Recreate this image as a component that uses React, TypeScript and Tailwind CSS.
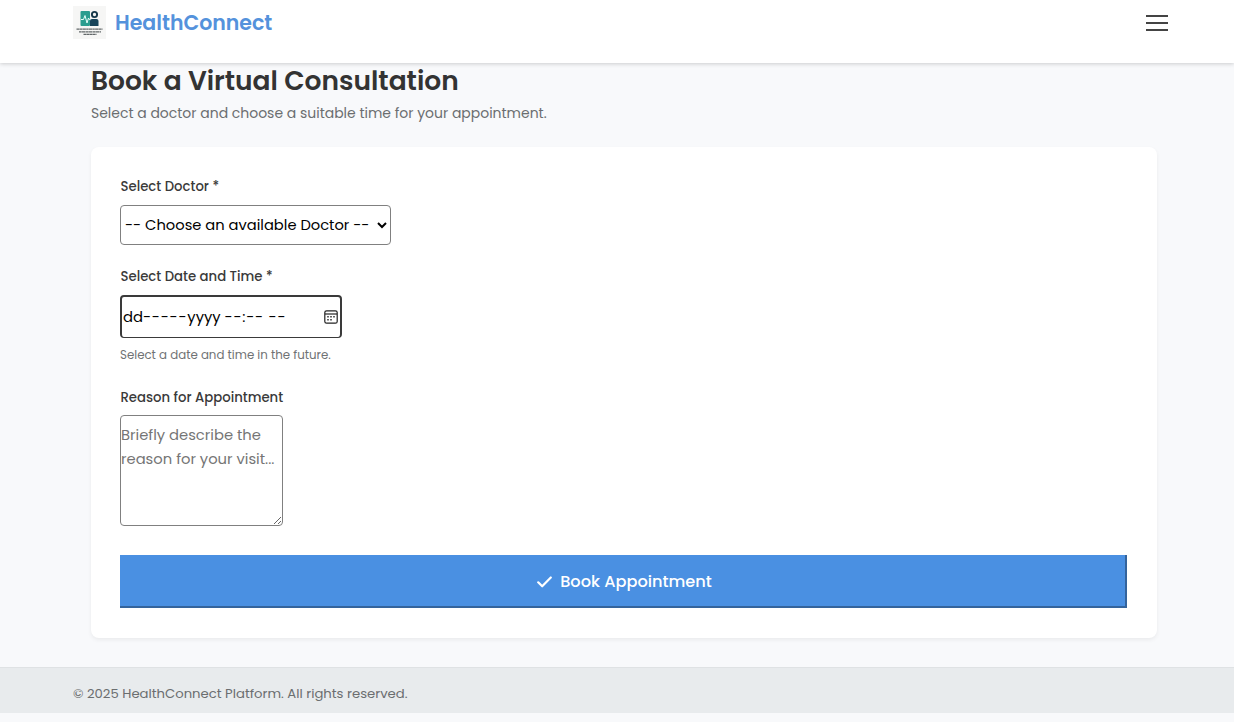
import React from "react";

function Logo() {
  return (
    <svg width="33" height="33" viewBox="0 0 33 33" aria-hidden="true">
      <rect width="33" height="33" fill="#f6f6f5" />
      <rect x="7.500" y="5" width="9.500" height="15" rx="1" fill="#2a9d8f" />
      <path d="M8 13.500h2.500l1.500-4 2 7.500 1.500-5 .8 1.500h1.200" fill="none" stroke="#e6fffa" strokeWidth="1" />
      <circle cx="21.500" cy="8.500" r="2.600" fill="none" stroke="#17384a" strokeWidth="1.900" />
      <path d="M17 20v-5.500q0-1.500 2-1.500h4.500q2 0 2 2V20z" fill="#17445a" />
      <path d="M3.500 23.200h26" stroke="#63686a" strokeWidth="1.300" strokeDasharray="3.200 .3 2.400 .3" />
      <path d="M6 25.800h22" stroke="#63686a" strokeWidth="1.300" strokeDasharray="2.700 .3 3.600 .4" />
      <path d="M10.500 28.400h13" stroke="#63686a" strokeWidth="1.200" strokeDasharray="2.800 .3" />
    </svg>
  );
}

function CalendarIcon() {
  return (
    <svg width="14" height="14" viewBox="0 0 14 14" fill="none" aria-hidden="true">
      <rect x=".8" y=".8" width="12.400" height="12.400" rx="1.800" stroke="#222" strokeWidth="1.200" />
      <path d="M1 4h12" stroke="#222" strokeWidth="1.200" />
      <path d="M6.300 6.800h1.400M9.300 6.800h1.400M3.300 9.800h1.400M6.300 9.800h1.400M3.300 6.800h1.400" stroke="#222" strokeWidth="1.400" />
    </svg>
  );
}

function Label({ children, className = "" }: { children: React.ReactNode; className?: string }) {
  return (
    <div className={"h-5 whitespace-nowrap pl-[0.5px] text-[13.25px] font-medium leading-[22px] text-[#3a3a3a] " + className}>
      {children}
    </div>
  );
}

export default function App() {
  return (
    <div className="flex h-[722px] flex-col overflow-hidden bg-[#f8f9fb] font-['Poppins','Inter',sans-serif] text-[#333]">
      <header className="z-10 flex h-[63px] shrink-0 items-start justify-between bg-white pl-[73px] pr-[66px] pt-[6px] shadow-[0_1px_4px_rgba(0,0,0,0.18)]">
        <div className="flex items-center gap-[9px]">
          <Logo />
          <span className="whitespace-nowrap text-[20.5px] font-semibold leading-8 text-[#5492dc]">HealthConnect</span>
        </div>
        <button aria-label="Menu" className="mt-[9px] flex w-[22px] flex-col gap-[5px]">
          <span className="h-[2px] w-full bg-[#444]" />
          <span className="h-[2px] w-full bg-[#444]" />
          <span className="h-[2px] w-full bg-[#444]" />
        </button>
      </header>

      <main className="flex h-[604px] shrink-0 flex-col px-[91px]">
        <h1 className="h-9 w-max whitespace-nowrap text-[26.5px] font-semibold leading-9">Book a Virtual Consultation</h1>
        <p className="mt-1 h-5 w-max whitespace-nowrap text-[13.97px] leading-5 text-[#6b6e70]">
          Select a doctor and choose a suitable time for your appointment.
        </p>

        <form className="mt-6 flex h-[491px] w-[1066px] flex-col rounded-[8px] bg-white px-[29px] pt-[29px] shadow-[0_2px_4px_rgba(0,0,0,0.06)]">
          <Label>Select Doctor *</Label>
          <select className="mt-[9px] h-[40px] w-[271px] rounded-[4px] border border-[#808080] bg-white text-[14.7px] text-black">
            <option>-- Choose an available Doctor --</option>
          </select>

          <Label className="mt-[21px]">Select Date and Time *</Label>
          <div className="mt-[9px] flex h-[43px] w-[222px] items-center justify-between rounded-[4px] border-2 border-b-[1.500px] border-[#3a3a3a] bg-white pl-px pr-[2px] text-[14.75px] text-black">
            <span className="whitespace-nowrap">
              dd<span className="tracking-[0.75px]">-----</span>yyyy <span className="tracking-[0.75px]">--:-- --</span>
            </span>
            <CalendarIcon />
          </div>
          <div className="mt-[6px] h-5 w-max whitespace-nowrap text-[11.8px] leading-[22px] text-[#707274]">
            Select a date and time in the future.
          </div>

          <Label className="mt-[23px]">Reason for Appointment</Label>
          <textarea
            className="mt-[8px] h-[111px] w-[163px] rounded-[4px] border border-[#808080] bg-white py-[7px] text-[14.75px] leading-6 placeholder:text-[#757575]"
            placeholder={"Briefly describe the\nreason for your visit..."}
          />

          <button
            type="button"
            className="mt-[29px] flex h-[53px] w-[1007px] items-center justify-center gap-[8px] border-b-2 border-r-2 border-[#34649c] bg-[#4a90e2] pl-[4px] pt-[3px] text-[16.2px] font-medium text-white"
          >
            <svg width="15" height="12" viewBox="0 0 15 12" fill="none" aria-hidden="true">
              <path d="M1.200 6.300l4 4L13.800 1.500" stroke="white" strokeWidth="2.200" strokeLinecap="round" strokeLinejoin="round" />
            </svg>
            <span className="whitespace-nowrap">Book Appointment</span>
          </button>
        </form>
      </main>

      <footer className="flex h-[46px] shrink-0 items-center border-t border-[#dfe2e4] bg-[#e8ebed] px-[73px] pt-[6px]">
        <p className="whitespace-nowrap text-[13.21px] leading-5 text-[#6b6e70]">© 2025 HealthConnect Platform. All rights reserved.</p>
      </footer>
    </div>
  );
}
